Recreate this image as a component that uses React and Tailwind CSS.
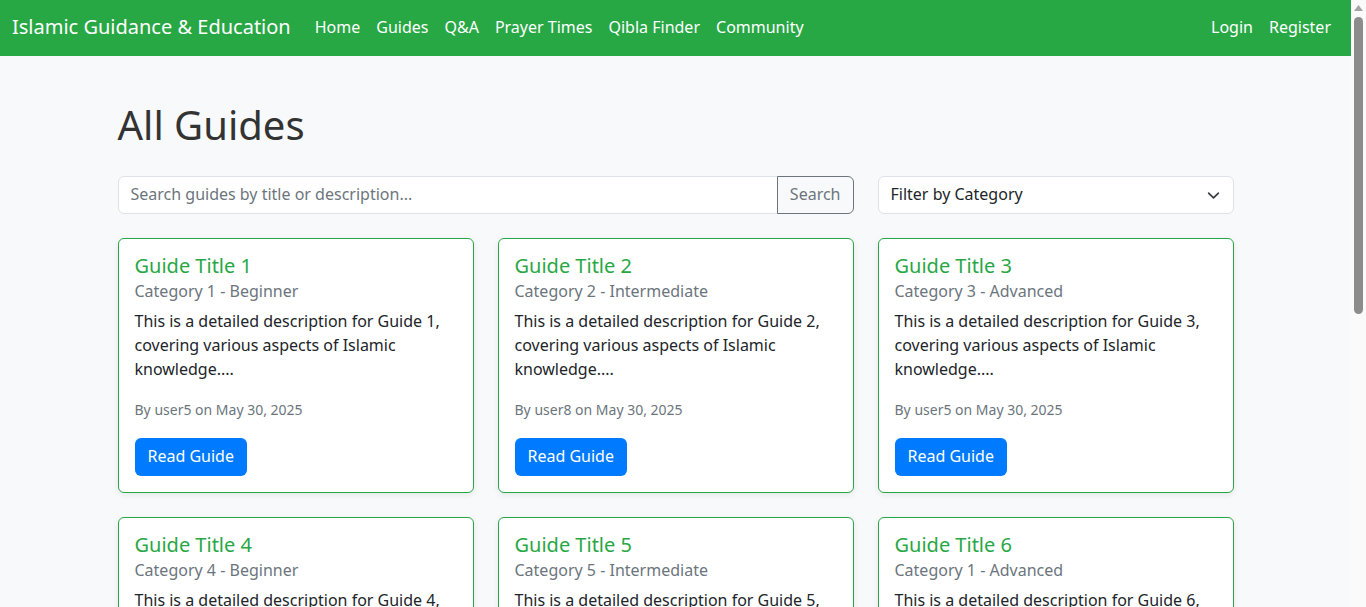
import React from "react";

const guides = [
  { id: 1, cat: "Category 1", level: "Beginner", user: "user5" },
  { id: 2, cat: "Category 2", level: "Intermediate", user: "user8" },
  { id: 3, cat: "Category 3", level: "Advanced", user: "user5" },
  { id: 4, cat: "Category 4", level: "Beginner", user: "user2" },
  { id: 5, cat: "Category 5", level: "Intermediate", user: "user7" },
  { id: 6, cat: "Category 1", level: "Advanced", user: "user3" },
  { id: 7, cat: "Category 2", level: "Beginner", user: "user1" },
  { id: 8, cat: "Category 3", level: "Intermediate", user: "user9" },
  { id: 9, cat: "Category 4", level: "Advanced", user: "user4" }
];

const navLinks = ["Home", "Guides", "Q&A", "Prayer Times", "Qibla Finder", "Community"];

const GuideCard = ({ guide }) => (
  <div className="bg-white border border-[#28a745] rounded-[6px] shadow-[0_2px_6px_rgba(0,0,0,0.08)] px-4 pt-[15px] pb-4 flex flex-col">
    <h5 className="text-[20px] leading-[24px] text-[#28a745]">Guide Title {guide.id}</h5>
    <h6 className="text-[16px] leading-[19px] text-[#6c757d] mt-[4px]">
      {guide.cat} - {guide.level}
    </h6>
    <p className="text-[16px] leading-[24px] text-[#212529] mt-[8px] mb-4">
      This is a detailed description for Guide {guide.id}, covering various aspects of Islamic knowledge....
    </p>
    <p className="text-[16px] leading-[24px] mb-4">
      <span className="text-[14px] text-[#6c757d]">By {guide.user} on May 30, 2025</span>
    </p>
    <div>
      <button className="bg-[#007bff] text-white text-[16px] leading-[24px] px-[13px] pt-[6px] pb-[8px] rounded-[6px]">
        Read Guide
      </button>
    </div>
  </div>
);

const App = () => {
  return (
    <div className="h-screen flex font-['Noto_Sans',sans-serif] text-[#212529]">
      <div className="flex-1 h-screen overflow-y-auto bg-[#f8f9fa]">
        {/* Navbar */}
        <nav className="bg-[#28a745] h-[56px] px-3 pb-[2px] flex items-center">
          <span className="text-white text-[20px] leading-[30px] mr-4">Islamic Guidance &amp; Education</span>
          <ul className="flex items-center">
            {navLinks.map((l) => (
              <li key={l} className="px-2 text-white text-[16px] leading-[24px]">{l}</li>
            ))}
          </ul>
          <ul className="flex items-center ml-auto">
            <li className="px-2 text-white text-[16px] leading-[24px]">Login</li>
            <li className="px-2 text-white text-[16px] leading-[24px]">Register</li>
          </ul>
        </nav>

        <div className="max-w-[1140px] mx-auto px-3 pt-[45px] pb-12">
          <h1 className="text-[40px] leading-[48px] text-[#333]">All Guides</h1>

          <div className="grid grid-cols-3 gap-x-6 mt-[27px] mb-6">
            <div className="col-span-2 flex">
              <input
                type="text"
                placeholder="Search guides by title or description..."
                className="flex-1 h-[38px] px-3 pb-[2px] bg-white border border-[#dee2e6] rounded-l-[6px] text-[16px] placeholder:text-[#6c757d] outline-none"
              />
              <button className="h-[38px] px-3 pb-[2px] border border-[#6c757d] rounded-r-[6px] text-[#6c757d] text-[16px] -ml-px">
                Search
              </button>
            </div>
            <div className="h-[38px] px-3 pb-[2px] bg-white border border-[#dee2e6] rounded-[6px] flex items-center justify-between text-[16px]">
              <span>Filter by Category</span>
              <svg width="13" height="13" viewBox="0 0 16 16" fill="none" stroke="#343a40" strokeWidth="2" strokeLinecap="round" strokeLinejoin="round" className="mr-[1px] mt-[2px]">
                <path d="m2 5 6 6 6-6" />
              </svg>
            </div>
          </div>

          <div className="grid grid-cols-3 gap-x-6 gap-y-6">
            {guides.map((g) => (
              <GuideCard key={g.id} guide={g} />
            ))}
          </div>
        </div>
      </div>

      {/* scrollbar */}
      <div className="w-[15px] h-screen bg-[#fafafa] flex flex-col items-center">
        <svg width="9" height="6" viewBox="0 0 9 6" className="mt-[5px]">
          <path d="M4.5 0 L9 6 L0 6 Z" fill="#a3a3a3" />
        </svg>
        <div className="w-[9px] h-[297px] mt-[6px] bg-[#8c8c8c] rounded-full" />
      </div>
    </div>
  );
};

export default App;
